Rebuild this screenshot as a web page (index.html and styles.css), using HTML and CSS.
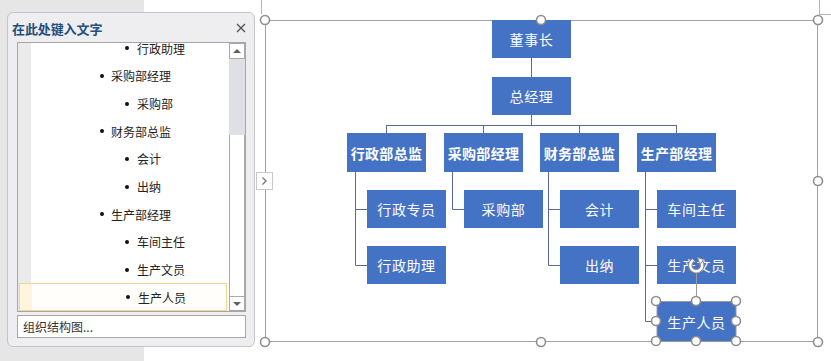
FILE: index.html
```html
<!DOCTYPE html>
<html lang="zh-CN">
<head>
<meta charset="utf-8">
<title>SmartArt 组织结构图</title>
<link rel="stylesheet" href="styles.css">
</head>
<body>
<div class="app">
  <div class="gutter"></div>
  <div class="doc">
    <div class="canvas">
      <svg class="wires" width="553" height="322" viewBox="0 0 553 322">
        <g class="frame">
          <rect x="0.5" y="0.5" width="552" height="321"/>
        </g>
        <g class="links">
          <line x1="266.5" y1="38" x2="266.5" y2="57"/>
          <line x1="266.5" y1="95" x2="266.5" y2="105.5"/>
          <line x1="121.5" y1="105.5" x2="411.5" y2="105.5"/>
          <line x1="121.5" y1="105" x2="121.5" y2="113"/>
          <line x1="218.5" y1="105" x2="218.5" y2="113"/>
          <line x1="314.5" y1="105" x2="314.5" y2="113"/>
          <line x1="411.5" y1="105" x2="411.5" y2="113"/>
          <polyline points="102,189.5 90.5,189.5 90.5,151"/>
          <polyline points="90.5,189 90.5,245.5 102,245.5"/>
          <polyline points="187.5,151 187.5,189.5 199,189.5"/>
          <polyline points="102,189.5 90.5,189.5"/>
          <polyline points="283.5,151 283.5,245.5 295,245.5"/>
          <line x1="283.5" y1="189.5" x2="295" y2="189.5"/>
          <polyline points="380.5,151 380.5,301.5 392,301.5"/>
          <line x1="380.5" y1="189.5" x2="392" y2="189.5"/>
          <line x1="380.5" y1="245.5" x2="392" y2="245.5"/>
        </g>
      </svg>

      <div class="node c0 r0">董事长</div>
      <div class="node c0 r1">总经理</div>

      <div class="node lead c1 r2">行政部总监</div>
      <div class="node lead c2 r2">采购部经理</div>
      <div class="node lead c3 r2">财务部总监</div>
      <div class="node lead c4 r2">生产部经理</div>

      <div class="node s1 r3">行政专员</div>
      <div class="node s1 r4">行政助理</div>
      <div class="node s2 r3">采购部</div>
      <div class="node s3 r3">会计</div>
      <div class="node s3 r4">出纳</div>
      <div class="node s4 r3">车间主任</div>
      <div class="node s4 r4">生产文员</div>
      <div class="node s4 r5 tall">生产人员</div>

      <svg class="handles" width="553" height="322" viewBox="0 0 553 322">
        <g class="sel">
          <rect x="392" y="281.5" width="79" height="40"/>
          <line x1="431.5" y1="250" x2="431.5" y2="281"/>
        </g>
        <g class="knob">
          <circle cx="0" cy="0" r="4.5"/>
          <circle cx="276" cy="0" r="4.5"/>
          <circle cx="553" cy="0" r="4.5"/>
          <circle cx="553" cy="161" r="4.5"/>
          <circle cx="0" cy="322" r="4.5"/>
          <circle cx="276" cy="322" r="4.5"/>
          <circle cx="553" cy="322" r="4.5"/>
          <circle cx="391" cy="281" r="4.5"/>
          <circle cx="431" cy="281" r="4.5"/>
          <circle cx="471" cy="281" r="4.5"/>
          <circle cx="391" cy="301" r="4.5"/>
          <circle cx="471" cy="301" r="4.5"/>
          <circle cx="391" cy="321" r="4.5"/>
          <circle cx="431" cy="321" r="4.5"/>
          <circle cx="471" cy="321" r="4.5"/>
        </g>
        <g class="rotate">
          <path class="rot-under" d="M435.6 241.2 A6 6 0 1 1 428.4 240"/>
          <path class="rot-over" d="M435.6 241.2 A6 6 0 1 1 428.4 240"/>
          <path class="rot-head" d="M432.5 237.5 L438.5 239.5 L435 244.5 Z"/>
        </g>
      </svg>

      <div class="collapse">
        <svg width="15" height="16" viewBox="0 0 15 16"><polyline points="5.5,4.5 9,8 5.5,11.5"/></svg>
      </div>
    </div>
  </div>

  <div class="mark mark-a"></div>
  <div class="mark mark-b"></div>
  <div class="mark mark-c"></div>

  <div class="pane">
    <div class="pane-head">
      <span class="pane-title">在此处键入文字</span>
      <svg class="pane-close" width="10" height="10" viewBox="0 0 10 10"><path d="M1 1 L9 9 M9 1 L1 9"/></svg>
    </div>
    <div class="listbox">
      <div class="items">
        <div class="row lv2 first">行政助理</div>
        <div class="row lv1">采购部经理</div>
        <div class="row lv2">采购部</div>
        <div class="row lv1">财务部总监</div>
        <div class="row lv2">会计</div>
        <div class="row lv2">出纳</div>
        <div class="row lv1">生产部经理</div>
        <div class="row lv2">车间主任</div>
        <div class="row lv2">生产文员</div>
        <div class="row lv2 current">生产人员</div>
      </div>
      <div class="scrollbar">
        <div class="sb-btn"><span class="tri up"></span></div>
        <div class="sb-track"><div class="sb-thumb"></div></div>
        <div class="sb-btn down"><span class="tri dn"></span></div>
      </div>
    </div>
    <div class="pane-foot">组织结构图...</div>
  </div>
</div>
</body>
</html>
```
FILE: styles.css
```css
* { box-sizing: border-box; }
html, body { margin: 0; padding: 0; }
body {
  font-family: "Noto Sans CJK SC", "Noto Sans", sans-serif;
  background: #fff;
}
.app {
  position: relative;
  display: flex;
  width: 831px;
  height: 361px;
  overflow: hidden;
  background: #fff;
}
.gutter {
  width: 144px;
  flex: none;
  background: #e6e6e6;
}
.doc {
  flex: 1;
  padding: 20px 0 0 121px;
}
.canvas {
  position: relative;
  width: 553px;
  height: 322px;
}
.wires, .handles {
  position: absolute;
  left: 0;
  top: 0;
  overflow: visible;
}
.handles { z-index: 2; }
.frame rect {
  fill: none;
  stroke: #a3a3a3;
  stroke-width: 1;
}
.links line, .links polyline {
  fill: none;
  stroke: #566a93;
  stroke-width: 1;
}
.sel rect, .sel line {
  fill: none;
  stroke: #9a9a9a;
  stroke-width: 1;
}
.knob circle {
  fill: #fff;
  stroke: #8e8e8e;
  stroke-width: 1.6;
}
.rot-under { fill: none; stroke: #8a8a8a; stroke-width: 4.6; }
.rot-over { fill: none; stroke: #fff; stroke-width: 2.4; }
.rot-head { fill: #fff; stroke: #8a8a8a; stroke-width: 1; }

.node {
  position: absolute;
  width: 79px;
  height: 38px;
  display: flex;
  align-items: center;
  justify-content: center;
  background: #4472c4;
  color: #fff;
  font-size: 14px;
  letter-spacing: 0.6px;
  white-space: nowrap;
  z-index: 1;
}
.node.lead { font-weight: bold; height: 39px; letter-spacing: 0.3px; }
.node.tall { height: 39px; }
.c0 { left: 227px; }
.c1 { left: 82px; }
.c2 { left: 179px; }
.c3 { left: 275px; }
.c4 { left: 372px; }
.s1 { left: 102px; }
.s2 { left: 199px; }
.s3 { left: 295px; }
.s4 { left: 392px; }
.r0 { top: 0; }
.r1 { top: 57px; }
.r2 { top: 113px; }
.r3 { top: 170px; }
.r4 { top: 226px; }
.r5 { top: 282px; }

.collapse {
  position: absolute;
  left: -9px;
  top: 152px;
  width: 17px;
  height: 18px;
  background: #fff;
  border: 1px solid #c9c9c9;
  z-index: 3;
}
.collapse svg { display: block; }
.collapse polyline { fill: none; stroke: #7a7a7a; stroke-width: 1.4; }

.mark { position: absolute; background: #b4b4b4; }
.mark-a { left: 819px; top: 0; width: 1px; height: 14px; }
.mark-b { left: 819px; top: 14px; width: 12px; height: 1px; }
.mark-c { left: 261px; top: 0; width: 1px; height: 14px; }

/* text pane */
.pane {
  position: absolute;
  left: 7px;
  top: 12px;
  width: 248px;
  height: 335px;
  background: #eeeef1;
  border: 1px solid #c4c4c8;
  border-radius: 6px;
  display: flex;
  flex-direction: column;
  z-index: 5;
}
.pane-head {
  height: 29px;
  flex: none;
  display: flex;
  align-items: center;
  justify-content: space-between;
  padding: 1px 8px 0 4px;
}
.pane-title {
  font-size: 13px;
  font-weight: bold;
  color: #1f4e80;
  letter-spacing: -0.1px;
}
.pane-close path { stroke: #505050; stroke-width: 1.3; fill: none; }
.listbox {
  margin: 0 8px 0 9px;
  height: 270px;
  flex: none;
  border: 1px solid #a6a6a6;
  background: #fff;
  display: flex;
  overflow: hidden;
}
.items {
  flex: 1;
  overflow: hidden;
  background: linear-gradient(to right, #ebebeb 13px, #fff 13px);
}
.row {
  height: 27.67px;
  display: flex;
  align-items: center;
  font-size: 12px;
  color: #222;
  white-space: nowrap;
}
.row.first { margin-top: -8.5px; }
.row::before {
  content: "";
  width: 4px;
  height: 4px;
  border-radius: 50%;
  background: #111;
  margin-right: 7px;
  flex: none;
}
.row.lv1 { padding-left: 82px; }
.row.lv2 { padding-left: 107px; }
.row.lv2::before { margin-right: 8px; }
.row.current {
  margin: 0 2px 0 1px;
  padding-left: 106px;
  border: 1px solid #f2d58f;
  background: linear-gradient(to right, #fdf5dc 12px, #fffefa 12px);
}
.scrollbar {
  width: 16px;
  flex: none;
  display: flex;
  flex-direction: column;
  background: #fff;
}
.sb-btn {
  height: 16px;
  flex: none;
  border: 1px solid #a9a9a9;
  background: #fff;
  display: flex;
  align-items: center;
  justify-content: center;
}
.sb-btn.down { height: 15px; }
.tri { width: 0; height: 0; border-left: 4px solid transparent; border-right: 4px solid transparent; }
.tri.up { border-bottom: 4px solid #606060; }
.tri.dn { border-top: 4px solid #606060; }
.sb-track {
  flex: 1;
  background: #dfdfe6;
  display: flex;
  flex-direction: column;
  justify-content: flex-end;
}
.sb-thumb {
  height: 161px;
  background: #fff;
  border-left: 1px solid #a9a9a9;
  border-right: 1px solid #a9a9a9;
}
.pane-foot {
  margin: 3px 8px 0 9px;
  height: 23px;
  flex: none;
  border: 1px solid #a6a6a6;
  background: #fff;
  font-size: 12px;
  color: #333;
  display: flex;
  align-items: center;
  padding-left: 5px;
}
```
